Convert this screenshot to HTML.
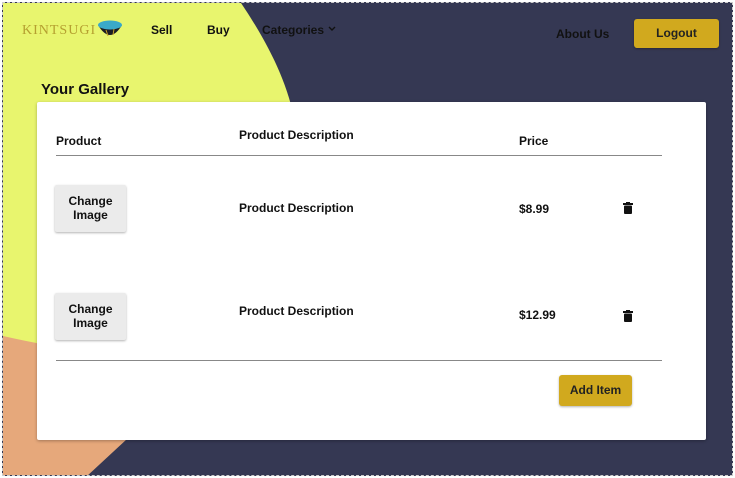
<!DOCTYPE html>
<html><head><meta charset="utf-8"><style>
*{margin:0;padding:0;box-sizing:border-box}
body{width:735px;height:478px;overflow:hidden;background:#fff;font-family:"Liberation Sans",Arial,sans-serif;position:relative}
#frame{position:absolute;left:2px;top:2px;width:731px;height:474px;background:#353853;overflow:hidden;border:1px dashed #ccc}
svg.bg{position:absolute;left:0;top:0}
.t{position:absolute;font-weight:bold;color:#111;font-size:12px}
.card{position:absolute;left:34px;top:99px;width:669px;height:338px;background:#fff;border-radius:2px;box-shadow:0 1px 3px rgba(0,0,0,.3)}
.btn{position:absolute;background:#ebebeb;border-radius:2px;box-shadow:0 1px 2px rgba(0,0,0,.3);font-weight:bold;font-size:12px;text-align:center;line-height:14px;color:#111;padding-top:9px}
.gold{position:absolute;background:#d1a91e;border-radius:3px;font-weight:bold;font-size:12px;color:#222;text-align:center;box-shadow:0 1px 2px rgba(0,0,0,.3)}
.hr{position:absolute;height:1px;background:#888}
</style></head><body>
<div id="frame">
<svg class="bg" width="731" height="474">
<path d="M0 0 L238 0 C265 40 285 80 292 120 L292 430 L0 430 Z" fill="#e8f56e"/>
<path d="M0 333 C30 340 60 345 95 350 L140 420 L124 436 L83 474 L0 474 Z" fill="#e6a87b"/>
</svg>
<div class="t" style="left:19px;top:20px;font-family:'Liberation Serif',serif;font-weight:normal;font-size:14px;color:#b5a030;letter-spacing:1px">KINTSUGI</div>
<svg style="position:absolute;left:94px;top:16px" width="26" height="20"><path d="M1 6 Q13 26 25 6 Z" fill="#1c1c24"/><ellipse cx="13" cy="6" rx="12" ry="4.5" fill="#3aa9c9"/><path d="M9 11 L11 17 M17 10 L16 16" stroke="#c9a227" stroke-width="1"/></svg>
<div class="t" style="left:148px;top:20px">Sell</div>
<div class="t" style="left:204px;top:20px">Buy</div>
<div class="t" style="left:259px;top:20px;color:#111">Categories</div>
<svg style="position:absolute;left:325px;top:23px" width="8" height="6"><path d="M1 1 L4 4 L7 1" stroke="#111" stroke-width="1.4" fill="none"/></svg>
<div class="t" style="left:553px;top:24px">About Us</div>
<div class="gold" style="left:631px;top:16px;width:85px;height:29px;line-height:29px">Logout</div>
<div class="t" style="left:38px;top:78px;font-size:15px">Your Gallery</div>
<div class="card">
<div class="t" style="left:19px;top:32px">Product</div>
<div class="t" style="left:202px;top:26px">Product Description</div>
<div class="t" style="left:482px;top:32px">Price</div>
<div class="hr" style="left:19px;top:53px;width:606px"></div>
<div class="btn" style="left:18px;top:83px;width:71px;height:47px">Change<br>Image</div>
<div class="t" style="left:202px;top:99px">Product Description</div>
<div class="t" style="left:482px;top:100px">$8.99</div>
<svg style="position:absolute;left:586px;top:100px" width="10" height="12"><rect x="0" y="1" width="10" height="2" fill="#111"/><rect x="3" y="0" width="4" height="2" fill="#111"/><rect x="1" y="3.5" width="8" height="8.5" rx="1" fill="#111"/></svg>
<div class="btn" style="left:18px;top:191px;width:71px;height:47px">Change<br>Image</div>
<div class="t" style="left:202px;top:202px">Product Description</div>
<div class="t" style="left:482px;top:206px">$12.99</div>
<svg style="position:absolute;left:586px;top:208px" width="10" height="12"><rect x="0" y="1" width="10" height="2" fill="#111"/><rect x="3" y="0" width="4" height="2" fill="#111"/><rect x="1" y="3.5" width="8" height="8.5" rx="1" fill="#111"/></svg>
<div class="hr" style="left:19px;top:258px;width:606px"></div>
<div class="gold" style="left:522px;top:273px;width:73px;height:31px;line-height:31px">Add Item</div>
</div>
</div>
</body></html>
